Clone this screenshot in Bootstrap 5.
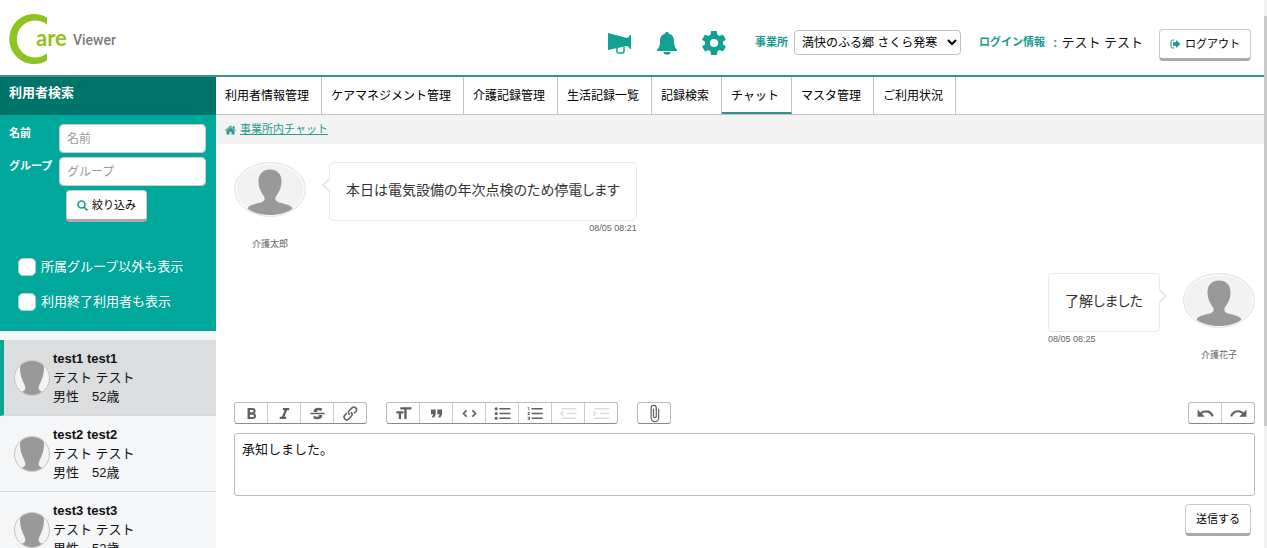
<!DOCTYPE html>
<html lang="ja">
<head>
<meta charset="utf-8">
<meta name="viewport" content="width=device-width, initial-scale=1">
<title>事業所内チャット | Care Viewer</title>
<link href="https://cdn.jsdelivr.net/npm/bootstrap@5.3.0/dist/css/bootstrap.min.css" rel="stylesheet">
<style>
:root{--teal:#00a79b;--teal-dark:#00736b;--line:#c3c3c3}
body{font-family:"Liberation Sans","Noto Sans CJK JP",sans-serif;font-size:13px;line-height:19px;color:#111;background:#fff}
svg{display:block;flex:none}
.teal-text{color:#159d91}
.fs-11{font-size:11px}
.fs-9{font-size:9px;line-height:14px;color:#666}
.site-head{height:77px;border-bottom:2px solid #3a9389;padding:10px 13px 0 8px}
.head-icons{gap:22px;margin-right:29px}
.head-icons a{width:25px;display:flex;justify-content:center}
.office-select{width:167px;height:25px;font-size:12px;border:1px solid #c0c0c0;border-radius:4px;background:#fff;color:#000;padding:0 3px;margin:0 18px 0 6px}
.btn-raised{--bs-btn-font-size:11px;--bs-btn-color:#000;--bs-btn-bg:#fff;--bs-btn-border-color:#c9c9c9;--bs-btn-border-radius:4px;--bs-btn-padding-x:10px;--bs-btn-padding-y:5px;--bs-btn-hover-bg:#f4f4f4;--bs-btn-hover-border-color:#bbb;--bs-btn-line-height:18px;border-bottom:3px solid #aaa}
.side{width:216px;background:#f4f6f8}
.side-title{height:38px;background:var(--teal-dark);padding:6px 9px;font-size:13px;font-weight:700;color:#fff;margin:0;line-height:19px}
.side-search{background:var(--teal);color:#fff;padding:9px 10px 20px 9px}
.side-search .field{margin-bottom:4px}
.side-search .field label{flex:0 0 50px;font-size:11px;font-weight:700;white-space:nowrap}
.side-search .form-control{height:29px;font-size:12px;line-height:18px;border:1px solid #ccc;border-radius:4px;padding:2px 7px}
.side-search .form-control::placeholder{color:#999}
.side-search .btn-raised{margin-left:57px}
.side-checks{gap:16px;padding:35px 0 0 9px}
.side-checks .form-check-input{width:18px;height:18px;margin:0 5px 0 0;border:1px solid #b5cfcc;border-radius:5px}
.user-list{margin-top:9px}
.user-item{padding:9px 0 9px 14px;border-bottom:1px solid #d5d9dc;color:#111;text-decoration:none;gap:3px}
.user-item.current{background:#dbdddf;border-left:4px solid #0aa595;padding-left:10px}
.tabs{border-bottom:1px solid var(--line)}
.tabs a{display:block;height:37px;padding:9px 12px 0 9px;font-size:12px;line-height:20px;color:#000;text-decoration:none;border-right:1px solid var(--line);white-space:nowrap}
.tabs a.active{border-bottom:2px solid #2a9288}
.crumbs{background:#f3f3f3;height:29px;padding:0 9px;gap:4px}
.crumbs a{color:#2b9a90}
.chat{padding:18px 9px 0 18px}
.msg{height:111px;gap:23px}
.msg-who{width:72px;text-align:center}
.msg-who .fs-9{margin-top:20px}
.bubble{position:relative;border:1px solid #e9e9e9;border-radius:5px;padding:16px 16px 20px;font-size:14px;line-height:22px;height:59px;color:#333;font-feature-settings:"palt"}
.bubble::before{content:"";position:absolute;top:17px;left:-6px;width:10px;height:10px;background:#fff;border:solid #e9e9e9;border-width:0 0 2px 2px;transform:rotate(45deg)}
.bubble.mine::before{left:auto;right:-6px;transform:rotate(225deg)}
.tools{margin-top:18px;gap:19px}
.tool-group{border:1px solid #bbb;border-bottom-color:#888;border-radius:3px;display:flex}
.tool-group button{width:33px;height:20px;border:0;border-left:1px solid #ccc;background:none;padding:0;display:flex;align-items:center;justify-content:center;color:#606060}
.tool-group button:first-child{border-left:0;width:32px}
.tool-group button:disabled{color:#ddd}
.tool-group svg{width:19px;height:19px;fill:currentColor}
.editor{display:block;width:100%;height:63px;margin-top:9px;border:1px solid #bbb;border-radius:3px;padding:6px 7px;font-size:13px;line-height:19px;color:#111;resize:none}
.scroll-track{width:3px;background:#f1f1f1;padding-top:16px}
.scroll-thumb{height:77%;background:#c9c9c9}
</style>
</head>
<body>
<svg width="0" height="0" class="position-absolute" aria-hidden="true">
  <symbol id="face" viewBox="0 0 36 36">
    <clipPath id="ring"><circle cx="18" cy="18" r="17"/></clipPath>
    <circle cx="18" cy="18" r="17.5" fill="#f3f3f3" stroke="#c4c4c4"/>
    <path clip-path="url(#ring)" fill="#999" d="M6 8C6 2 11 0 18 0s12 2 12 8c0 8-3 13-5 18-1 3 0 5 4 6v4H7v-4c4-1 5-3 4-6C9 21 6 16 6 8z"/>
  </symbol>
  <symbol id="person" viewBox="0 0 72 55">
    <ellipse cx="36" cy="27.5" rx="35.5" ry="27" fill="#f2f2f2" stroke="#e4e4e4"/>
    <ellipse cx="36" cy="27.5" rx="34" ry="25.500" fill="none" stroke="#fff"/>
    <path fill="#999" d="M36 7.500c7 0 11.500 4.500 11.500 11.500 0 7-2.500 11-5 14.500-2 3-1.500 5.500 2.500 7 6 1.500 12 2.500 13.500 6C54 50.500 45 53 36 53s-18-2.500-22.500-6.500c1.500-3.500 7.500-4.500 13.500-6 4-1.500 4.500-4 2.500-7-2.500-3.500-5-7.500-5-14.500C24.500 12 29 7.500 36 7.500z"/>
  </symbol>
</svg>
<div class="d-flex vh-100 overflow-hidden">
<div class="d-flex flex-column flex-grow-1 overflow-hidden">
  <header class="site-head d-flex align-items-center flex-shrink-0">
    <a href="#" class="me-auto align-self-start" aria-label="Care Viewer">
      <svg width="114" height="56" viewBox="8 10 114 56">
        <path fill="#8fc31f" d="M47 17.500A25 25 0 1 0 47 60.500V53.300A18.500 18.500 0 1 1 47 24.700z"/>
        <text x="36" y="46" font-family="Lato" font-weight="700" font-size="22" fill="#8fc31f">are</text>
        <text x="73" y="45" font-family="Roboto" font-weight="500" font-size="14" fill="#7b7b7b">Viewer</text>
      </svg>
    </a>
    <nav class="head-icons d-flex align-items-center teal-text" aria-label="ショートカット">
      <a href="#" aria-label="お知らせ"><svg width="25" height="24" viewBox="0 0 25 24" fill="#10a193"><path d="M1 2l19 5c1 0 2-1 3-3h1v14h-1c-1-2-2-3-3-3L1 19z"/><path d="M10 16v4.500q0 1.500 1.500 1.500h4q1.500 0 1.500-1.500V16" fill="none" stroke="#10a193" stroke-width="1.500"/></svg></a>
      <a href="#" aria-label="通知"><svg width="22" height="24" viewBox="0 0 22 24" fill="#10a193"><path d="M9.300 2.500a1.700 1.700 0 0 1 3.400 0C16 3.300 18 6 18 10c0 4 .5 6.500 3 8.500V20H1v-1.500C3.500 16.500 4 14 4 10c0-4 2-6.700 5.300-7.500zM7.500 21h7a3.500 2.800 0 0 1-7 0z"/></svg></a>
      <a href="#" aria-label="設定"><svg width="24" height="24" viewBox="2 2 20 20" fill="#10a193"><path d="M19.400 13a7.500 7.500 0 0 0 0-2l2.100-1.600a.5.5 0 0 0 .1-.7l-2-3.400a.5.5 0 0 0-.6-.2l-2.500 1a7 7 0 0 0-1.700-1l-.4-2.600a.5.5 0 0 0-.5-.5h-4a.5.5 0 0 0-.4.500L9.100 5.100a7 7 0 0 0-1.700 1l-2.500-1a.5.5 0 0 0-.6.200l-2 3.400a.5.5 0 0 0 .1.700L4.600 11a7.500 7.500 0 0 0 0 2l-2.200 1.600a.5.5 0 0 0-.1.700l2 3.400c.1.200.4.300.6.200l2.500-1a7 7 0 0 0 1.700 1l.4 2.600c0 .3.200.5.5.5h4c.2 0 .4-.2.500-.5l.4-2.600a7 7 0 0 0 1.700-1l2.500 1c.2.100.5 0 .6-.2l2-3.400a.5.5 0 0 0-.1-.7zM12 15.400a3.400 3.400 0 1 1 0-6.800 3.400 3.400 0 0 1 0 6.800z"/></svg></a>
    </nav>
    <label for="office" class="fs-11 fw-bold teal-text text-nowrap">事業所</label>
    <select id="office" class="office-select"><option>満快のふる郷 さくら発寒</option></select>
    <span class="fs-11 fw-bold teal-text text-nowrap">ログイン情報</span>
    <span class="text-nowrap teal-text fw-bold ps-2 pe-1">:</span><span class="text-nowrap">テスト テスト</span>
    <button type="button" class="btn btn-raised d-flex align-items-center ms-3 gap-1 text-nowrap mt-1"><svg width="11" height="10" viewBox="0 0 11 10"><path d="M4 1H2.500A1.500 1.500 0 0 0 1 2.500v5A1.500 1.500 0 0 0 2.500 9H4" fill="none" stroke="#159d91"/><path d="M3 3.200H6V1l4.500 4L6 9V6.800H3z" fill="#159d91"/></svg>ログアウト</button>
  </header>
  <div class="d-flex flex-grow-1 overflow-hidden">
    <aside class="side flex-shrink-0">
      <h2 class="side-title">利用者検索</h2>
      <form class="side-search">
        <div class="field d-flex"><label for="nm">名前</label><input id="nm" class="form-control" type="text" placeholder="名前"></div>
        <div class="field d-flex"><label for="grp">グループ</label><input id="grp" class="form-control" type="text" placeholder="グループ"></div>
        <button type="button" class="btn btn-raised d-flex align-items-center gap-1 text-nowrap"><svg width="11" height="11" viewBox="0 0 11 11" fill="none" stroke="#23978f" stroke-width="1.700"><circle cx="4.500" cy="4.500" r="3.500"/><path d="M7 7l3.500 3.500"/></svg>絞り込み</button>
        <div class="side-checks d-flex flex-column">
          <div class="d-flex align-items-center"><input class="form-check-input" type="checkbox" id="c1"><label for="c1">所属グループ以外も表示</label></div>
          <div class="d-flex align-items-center"><input class="form-check-input" type="checkbox" id="c2"><label for="c2">利用終了利用者も表示</label></div>
        </div>
      </form>
      <div class="user-list">
        <a href="#" class="user-item current d-flex align-items-center"><svg width="36" height="36"><use href="#face"/></svg><span><strong class="d-block">test1 test1</strong><span class="d-block">テスト テスト</span><span class="d-block">男性　52歳</span></span></a>
        <a href="#" class="user-item d-flex align-items-center"><svg width="36" height="36"><use href="#face"/></svg><span><strong class="d-block">test2 test2</strong><span class="d-block">テスト テスト</span><span class="d-block">男性　52歳</span></span></a>
        <a href="#" class="user-item d-flex align-items-center"><svg width="36" height="36"><use href="#face"/></svg><span><strong class="d-block">test3 test3</strong><span class="d-block">テスト テスト</span><span class="d-block">男性　52歳</span></span></a>
      </div>
    </aside>
    <main class="flex-grow-1 overflow-hidden">
      <nav class="tabs d-flex" aria-label="メイン">
        <a href="#">利用者情報管理</a><a href="#">ケアマネジメント管理</a><a href="#">介護記録管理</a><a href="#">生活記録一覧</a><a href="#">記録検索</a><a href="#" class="active" aria-current="page">チャット</a><a href="#">マスタ管理</a><a href="#">ご利用状況</a>
      </nav>
      <div class="crumbs d-flex align-items-center fs-11">
        <svg width="11" height="10" viewBox="0 0 11 10" fill="#2b9a90"><path d="M5.500.5L8 2.700V1h1.500v3L11 5.300l-.6.700L5.500 1.800.6 6 0 5.300z"/><path d="M5.500 2.300L9.500 5.700v3.800h-3V6.700h-2v2.800h-3V5.700z"/></svg>
        <a href="#">事業所内チャット</a>
      </div>
      <div class="chat">
        <article class="msg d-flex">
          <div class="msg-who"><svg width="72" height="55"><use href="#person"/></svg><div class="fs-9">介護太郎</div></div>
          <div><div class="bubble">本日は電気設備の年次点検のため停電します</div><time class="fs-9 d-block text-end">08/05 08:21</time></div>
        </article>
        <article class="msg d-flex flex-row-reverse">
          <div class="msg-who"><svg width="72" height="55"><use href="#person"/></svg><div class="fs-9">介護花子</div></div>
          <div><div class="bubble mine">了解しました</div><time class="fs-9 d-block">08/05 08:25</time></div>
        </article>
        <div class="tools d-flex" role="toolbar" aria-label="書式">
          <div class="tool-group">
            <button type="button" aria-label="太字"><svg viewBox="0 0 24 24"><path d="M15.600 11.800c1-.7 1.600-1.800 1.600-2.800a4 4 0 0 0-4-4H7v14h7c2.100 0 3.700-1.700 3.700-3.800 0-1.500-.8-2.800-2.100-3.400zM10 7.500h3a1.500 1.500 0 1 1 0 3h-3v-3zm3.500 9H10v-3h3.500a1.500 1.500 0 1 1 0 3z"/></svg></button>
            <button type="button" aria-label="斜体"><svg viewBox="0 0 24 24"><path d="M10 5v3h2.200l-3.400 8H6v3h8v-3h-2.200l3.400-8H18V5z"/></svg></button>
            <button type="button" aria-label="取り消し線"><svg viewBox="0 0 24 24"><path d="M12.730 14l.28.14c.26.15.45.3.57.44.12.14.18.3.18.5 0 .3-.15.56-.44.75-.3.2-.76.3-1.390.3A13.520 13.520 0 0 1 7 14.950v3.370a10.640 10.640 0 0 0 4.840.88c1.260 0 2.350-.19 3.280-.56.93-.37 1.640-.9 2.140-1.570s.74-1.450.74-2.320c0-.26-.02-.51-.06-.75h-5.210zm-5.500-4c-.08-.34-.12-.7-.12-1.100 0-1.290.52-2.300 1.580-3.020 1.050-.72 2.500-1.080 4.340-1.080 1.620 0 3.280.34 4.970 1l-1.300 2.930c-1.470-.6-2.730-.9-3.800-.9-.55 0-.96.08-1.200.26-.26.17-.38.38-.38.64 0 .27.16.52.48.74.17.12.53.3 1.050.53H7.230zM3 13h18v-2H3v2z"/></svg></button>
            <button type="button" aria-label="リンク"><svg viewBox="0 0 24 24"><path d="M9.880 13.700a4.300 4.300 0 0 1 0-6.070l3.370-3.370a4.260 4.260 0 0 1 6.070 0 4.300 4.300 0 0 1 0 6.060l-1.960 1.720a.91.91 0 1 1-1.300-1.300l1.970-1.710a2.460 2.460 0 0 0-3.480-3.480l-3.380 3.370a2.460 2.460 0 0 0 0 3.480.91.91 0 1 1-1.300 1.300z"/><path d="M4.250 19.460a4.300 4.300 0 0 1 0-6.070l1.930-1.900a.91.91 0 1 1 1.300 1.300l-1.930 1.900a2.460 2.460 0 0 0 3.480 3.480l3.370-3.380c.96-.96.96-2.520 0-3.480a.91.91 0 1 1 1.300-1.300 4.300 4.300 0 0 1 0 6.070l-3.380 3.380a4.260 4.260 0 0 1-6.070 0z"/></svg></button>
          </div>
          <div class="tool-group">
            <button type="button" aria-label="見出し"><svg viewBox="0 0 24 24"><path d="M12 9v3H9v7H6v-7H3V9h9zM8 4h14v3h-6v12h-3V7H8V4z"/></svg></button>
            <button type="button" aria-label="引用"><svg viewBox="0 0 24 24"><path d="M6 17h3l2-4V7H5v6h3zm8 0h3l2-4V7h-6v6h3z"/></svg></button>
            <button type="button" aria-label="コード"><svg viewBox="0 0 24 24"><path d="M18.200 12L15 15.200l1.400 1.400L21 12l-4.600-4.600L15 8.800l3.200 3.200zM5.800 12L9 8.800 7.600 7.400 3 12l4.600 4.600L9 15.200 5.800 12z"/></svg></button>
            <button type="button" aria-label="箇条書き"><svg viewBox="0 0 24 24"><path d="M4 4a2 2 0 1 0 0 4 2 2 0 0 0 0-4zm0 6a2 2 0 1 0 0 4 2 2 0 0 0 0-4zm0 6a2 2 0 1 0 0 4 2 2 0 0 0 0-4zm4 3h14v-2H8v2zm0-6h14v-2H8v2zm0-8v2h14V5H8z"/></svg></button>
            <button type="button" aria-label="番号付き"><svg viewBox="0 0 24 24"><path d="M2 17h2v.5H3v1h1v.5H2v1h3v-4H2v1zm1-9h1V4H2v1h1v3zm-1 3h1.800L2 13.100v.9h3v-1H3.200L5 10.900V10H2v1zm5-6v2h14V5H7zm0 14h14v-2H7v2zm0-6h14v-2H7v2z"/></svg></button>
            <button type="button" aria-label="字下げ解除" disabled><svg viewBox="0 0 24 24"><path d="M3 19h19v-2H3v2zm7-6h12v-2H10v2zm-8.300-.3l2.800 2.900L6 14.200 4 12l2-2-1.400-1.500L1 12l.7.7zM3 5v2h19V5H3z"/></svg></button>
            <button type="button" aria-label="字下げ" disabled><svg viewBox="0 0 24 24"><path d="M3 19h19v-2H3v2zm7-6h12v-2H10v2zm-6.900-1L1 14.200l1.400 1.400L6 12l-.7-.7-2.800-2.800L1 9.900 3.100 12zM3 5v2h19V5H3z"/></svg></button>
          </div>
          <div class="tool-group">
            <button type="button" aria-label="添付"><svg viewBox="0 0 24 24"><path d="M16.500 6v11.500a4 4 0 1 1-8 0V5a2.500 2.500 0 0 1 5 0v10.500a1 1 0 1 1-2 0V6H10v9.500a2.500 2.500 0 0 0 5 0V5a4 4 0 1 0-8 0v12.500a5.500 5.500 0 0 0 11 0V6h-1.500z"/></svg></button>
          </div>
          <div class="tool-group ms-auto">
            <button type="button" aria-label="元に戻す"><svg viewBox="0 0 24 24"><path d="M12.500 8c-2.600 0-5 1-6.900 2.600L2 7v9h9l-3.600-3.600A8 8 0 0 1 20 16l2.400-.8a10.500 10.500 0 0 0-10-7.200z"/></svg></button>
            <button type="button" aria-label="やり直す"><svg viewBox="0 0 24 24"><path d="M18.400 10.600a10.500 10.500 0 0 0-16.900 4.600L4 16a8 8 0 0 1 12.700-3.600L13 16h9V7l-3.600 3.600z"/></svg></button>
          </div>
        </div>
        <textarea class="editor" aria-label="メッセージ">承知しました。</textarea>
        <div class="d-flex justify-content-end pt-2 pe-1"><button type="button" class="btn btn-raised">送信する</button></div>
      </div>
    </main>
  </div>
</div>
<div class="scroll-track flex-shrink-0" aria-hidden="true"><div class="scroll-thumb"></div></div>
</div>
<script src="https://cdn.jsdelivr.net/npm/bootstrap@5.3.0/dist/js/bootstrap.bundle.min.js"></script>
</body>
</html>
